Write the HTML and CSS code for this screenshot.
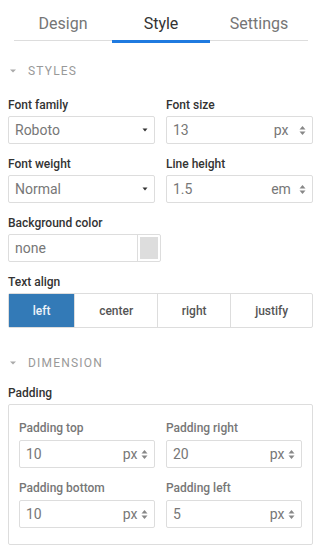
FILE: index.html
```html
<!DOCTYPE html>
<html>
<head>
<meta charset="utf-8">
<link rel="stylesheet" href="styles.css">
</head>
<body>
<div class="tabs">
  <div class="tab">Design</div>
  <div class="tab active">Style</div>
  <div class="tab">Settings</div>
</div>

<div class="section-title"><svg class="caret-sec" width="6" height="4" viewBox="0 0 6 4"><path d="M0 0.5H6L3 3.5Z"/></svg>STYLES</div>

<div class="grid">
  <div class="field">
    <div class="label">Font family</div>
    <div class="control"><span class="value">Roboto</span><svg class="caret" width="6" height="4" viewBox="0 0 6 4"><path d="M0.5 0.5H5.5L3 3.5Z"/></svg></div>
  </div>
  <div class="field">
    <div class="label">Font size</div>
    <div class="control"><span class="value">13</span><span class="unit">px</span><svg class="spin" width="7" height="11" viewBox="0 0 7 11"><path d="M0.5 4.5H6.5L3.5 1Z"/><path d="M0.5 6.5H6.5L3.5 10Z"/></svg></div>
  </div>
  <div class="field">
    <div class="label">Font weight</div>
    <div class="control"><span class="value">Normal</span><svg class="caret" width="6" height="4" viewBox="0 0 6 4"><path d="M0.5 0.5H5.5L3 3.5Z"/></svg></div>
  </div>
  <div class="field">
    <div class="label">Line height</div>
    <div class="control"><span class="value">1.5</span><span class="unit">em</span><svg class="spin" width="7" height="11" viewBox="0 0 7 11"><path d="M0.5 4.5H6.5L3.5 1Z"/><path d="M0.5 6.5H6.5L3.5 10Z"/></svg></div>
  </div>
</div>

<div class="field">
  <div class="label">Background color</div>
  <div class="color-input"><span class="value">none</span><span class="swatch-wrap"><span class="swatch"></span></span></div>
</div>

<div class="field last">
  <div class="label">Text align</div>
  <div class="btn-group">
    <div class="btn active">left</div>
    <div class="btn">center</div>
    <div class="btn">right</div>
    <div class="btn">justify</div>
  </div>
</div>

<div class="section-title dim"><svg class="caret-sec" width="6" height="4" viewBox="0 0 6 4"><path d="M0 0.5H6L3 3.5Z"/></svg>DIMENSION</div>

<div class="field last">
  <div class="label">Padding</div>
  <div class="box">
    <div class="grid inner">
      <div class="field">
        <div class="label sub">Padding top</div>
        <div class="control"><span class="value">10</span><span class="unit">px</span><svg class="spin" width="7" height="11" viewBox="0 0 7 11"><path d="M0.5 4.5H6.5L3.5 1Z"/><path d="M0.5 6.5H6.5L3.5 10Z"/></svg></div>
      </div>
      <div class="field">
        <div class="label sub">Padding right</div>
        <div class="control"><span class="value">20</span><span class="unit">px</span><svg class="spin" width="7" height="11" viewBox="0 0 7 11"><path d="M0.5 4.5H6.5L3.5 1Z"/><path d="M0.5 6.5H6.5L3.5 10Z"/></svg></div>
      </div>
      <div class="field last">
        <div class="label sub">Padding bottom</div>
        <div class="control"><span class="value">10</span><span class="unit">px</span><svg class="spin" width="7" height="11" viewBox="0 0 7 11"><path d="M0.5 4.5H6.5L3.5 1Z"/><path d="M0.5 6.5H6.5L3.5 10Z"/></svg></div>
      </div>
      <div class="field last">
        <div class="label sub">Padding left</div>
        <div class="control"><span class="value">5</span><span class="unit">px</span><svg class="spin" width="7" height="11" viewBox="0 0 7 11"><path d="M0.5 4.5H6.5L3.5 1Z"/><path d="M0.5 6.5H6.5L3.5 10Z"/></svg></div>
      </div>
    </div>
  </div>
</div>
</body>
</html>
```

FILE: styles.css
```css
* { box-sizing: border-box; }
html, body { margin: 0; background: #fff; }
body {
  padding: 0 11px 0 8px;
  font-family: Roboto, "Liberation Sans", sans-serif;
  color: #333;
}
.tabs {
  display: flex;
  align-items: flex-start;
  margin: 0 5px 0 6px;
}
.tab {
  flex: 1;
  text-align: center;
  font-size: 16px;
  line-height: 20px;
  padding: 14px 0 6px;
  color: #757575;
  border-bottom: 1px solid #ddd;
}
.tab.active {
  color: #333;
  border-bottom: 3px solid #1f7ae0;
}
.section-title {
  display: flex;
  align-items: center;
  font-size: 12px;
  line-height: 16px;
  letter-spacing: 1.2px;
  color: #999;
  margin: 20px 0 18px;
}
.section-title.dim { margin: 27px 0 14px; }
.caret-sec { fill: #aaa; margin: 0 12px 0 2px; }
.grid {
  display: grid;
  grid-template-columns: 1fr 1fr;
  column-gap: 11px;
}
.field { margin-bottom: 12px; }
.field.last { margin-bottom: 0; }
.label {
  font-size: 12px;
  font-weight: 500;
  line-height: 16px;
  margin-bottom: 3px;
  color: #333;
}
.label.sub { color: #777; margin-bottom: 4px; }
.control {
  height: 28px;
  border: 1px solid #ddd;
  border-radius: 2px;
  display: flex;
  align-items: center;
  padding: 0 6px 0 6px;
}
.value {
  flex: 1;
  font-size: 14px;
  color: #777;
}
.unit {
  width: 26px;
  text-align: center;
  font-size: 14px;
  color: #777;
  margin-right: 5px;
}
.inner .unit { width: 22px; margin-right: 0; }
.caret { fill: #333; margin-right: 0; }
.spin { fill: #888; }
.color-input {
  width: 153px;
  height: 28px;
  border: 1px solid #ddd;
  border-radius: 2px;
  display: flex;
  align-items: stretch;
}
.color-input .value {
  display: flex;
  align-items: center;
  padding-left: 6px;
  border-right: 1px solid #ddd;
}
.swatch-wrap {
  width: 22px;
  padding: 2px;
  display: flex;
}
.swatch { flex: 1; background: #ddd; }
.btn-group {
  display: flex;
  height: 35px;
  border: 1px solid #ddd;
  border-radius: 2px;
}
.btn {
  flex: 1 1 auto;
  display: flex;
  align-items: center;
  justify-content: center;
  font-size: 12px;
  font-weight: 500;
  color: #555;
  border-left: 1px solid #ddd;
}
.btn:first-child { border-left: none; }
.btn.active { background: #337ab7; color: #eef3f9; }
.box {
  margin-top: 2px;
  border: 1px solid #ddd;
  border-radius: 2px;
  padding: 15px 10px 16px;
}
```
